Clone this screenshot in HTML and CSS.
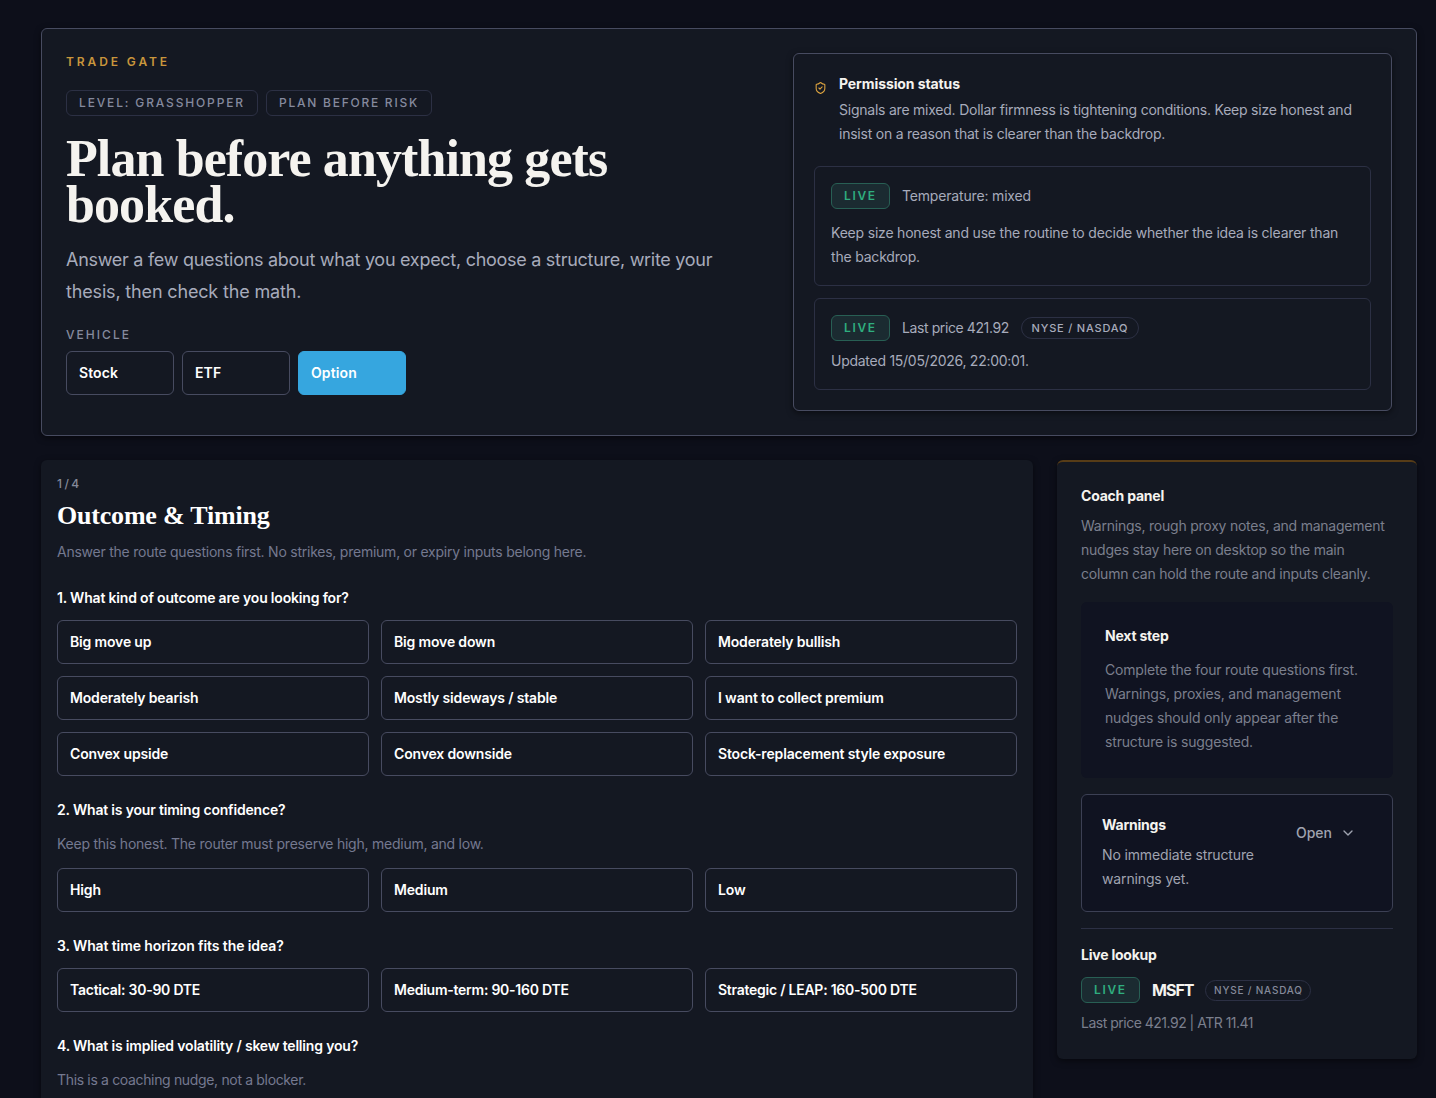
FILE: index.html
```
<!DOCTYPE html>
<html lang="en">
<head>
  <meta charset="UTF-8" />
  <meta name="viewport" content="width=device-width, initial-scale=1.0"/>
  <title>Trade Gate</title>
  <link rel="stylesheet" href="styles.css">
</head>
<body>
  <div class="page">
    <section class="hero">
      <div class="hero-main">
        <div class="eyebrow">Trade Gate</div>
        <div class="chips">
          <span class="chip">Level: Grasshopper</span>
          <span class="chip chip-plan">Plan before risk</span>
        </div>
        <h1>Plan before anything gets booked.</h1>
        <p class="lead">Answer a few questions about what you expect, choose a structure, write your <span class="lead-end">thesis, then check the math.</span></p>
        <div class="label">Vehicle</div>
        <div class="vehicles">
          <button class="option">Stock</button>
          <button class="option">ETF</button>
          <button class="option active">Option</button>
        </div>
      </div>

      <div class="status-card">
        <div class="status-head">
          <svg class="shield" viewBox="0 0 24 24" fill="none" stroke="currentColor" stroke-width="2" stroke-linecap="round" stroke-linejoin="round">
            <path d="M20 13c0 5-3.500 7.500-7.660 8.950a1 1 0 0 1-.67-.01C7.500 20.500 4 18 4 13V6a1 1 0 0 1 1-1c2 0 4.500-1.200 6.240-2.720a1.170 1.170 0 0 1 1.520 0C14.510 3.810 17 5 19 5a1 1 0 0 1 1 1z"/>
            <path d="m9 12 2 2 4-4"/>
          </svg>
          <div>
            <h3>Permission status</h3>
            <p class="signal">Signals are mixed. Dollar firmness is tightening conditions. Keep size honest and insist on a reason that is clearer than the backdrop.</p>
          </div>
        </div>
        <div class="status-box">
          <div class="row"><span class="live">Live</span><span class="temp">Temperature: mixed</span></div>
          <p>Keep size honest and use the routine to decide whether the idea is clearer than the backdrop.</p>
        </div>
        <div class="status-box price-box">
          <div class="row"><span class="live">Live</span><span class="price">Last price 421.92</span><span class="pill">NYSE / NASDAQ</span></div>
          <p>Updated 15/05/2026, 22:00:01.</p>
        </div>
      </div>
    </section>

    <div class="columns">
      <main class="panel">
        <div class="step">1 / 4</div>
        <h2>Outcome &amp; Timing</h2>
        <p class="muted">Answer the route questions first. No strikes, premium, or expiry inputs belong here.</p>

        <section class="question">
          <h4>1. What kind of outcome are you looking for?</h4>
          <div class="options">
            <button class="option">Big move up</button>
            <button class="option">Big move down</button>
            <button class="option">Moderately bullish</button>
            <button class="option">Moderately bearish</button>
            <button class="option">Mostly sideways / stable</button>
            <button class="option">I want to collect premium</button>
            <button class="option">Convex upside</button>
            <button class="option">Convex downside</button>
            <button class="option">Stock-replacement style exposure</button>
          </div>
        </section>

        <section class="question">
          <h4>2. What is your timing confidence?</h4>
          <p class="muted">Keep this honest. The router must preserve high, medium, and low.</p>
          <div class="options">
            <button class="option">High</button>
            <button class="option">Medium</button>
            <button class="option">Low</button>
          </div>
        </section>

        <section class="question">
          <h4 class="horizon">3. What time horizon fits the idea?</h4>
          <div class="options">
            <button class="option dte">Tactical: 30-90 DTE</button>
            <button class="option dte">Medium-term: 90-160 DTE</button>
            <button class="option dte">Strategic / LEAP: 160-500 DTE</button>
          </div>
        </section>

        <section class="question">
          <h4>4. What is implied volatility / skew telling you?</h4>
          <p class="muted nudge">This is a coaching nudge, not a blocker.</p>
        </section>
      </main>

      <aside class="coach">
        <h3>Coach panel</h3>
        <p class="coach-text">Warnings, rough proxy notes, and management nudges stay here on desktop so the main column can hold the route and inputs cleanly.</p>
        <div class="next">
          <h3>Next step</h3>
          <p>Complete the four route questions first. Warnings, proxies, and management nudges should only appear after the structure is suggested.</p>
        </div>
        <div class="warnings">
          <div class="warnings-text">
            <h3>Warnings</h3>
            <p>No immediate structure warnings yet.</p>
          </div>
          <button class="open">Open
            <svg viewBox="0 0 24 24" fill="none" stroke="currentColor" stroke-width="2" stroke-linecap="round" stroke-linejoin="round"><path d="m6 9 6 6 6-6"/></svg>
          </button>
        </div>
        <div class="lookup">
          <h3>Live lookup</h3>
          <div class="row"><span class="live">Live</span><strong class="ticker">MSFT</strong><span class="pill small">NYSE / NASDAQ</span></div>
          <p class="quote">Last price 421.92 | ATR 11.41</p>
        </div>
      </aside>
    </div>
  </div>
</body>
</html>
```
FILE: styles.css
```
*{margin:0;padding:0;box-sizing:border-box;}
body{background:#0d0f1a;color:#f5f3ef;font-family:Inter,sans-serif;font-size:14px;line-height:24px;letter-spacing:-0.22px;height:100vh;overflow:hidden;}
button{font-family:inherit;letter-spacing:inherit;cursor:pointer;}
.page{padding:28px 19px 0 41px;}

.hero{display:grid;grid-template-columns:1fr 599px;gap:24px;height:408px;padding:24px;background:#141822;border:1px solid #474b60;border-radius:6px;box-shadow:0 2px 6px rgba(0,0,0,0.5);}
.eyebrow{font-size:12px;line-height:18px;font-weight:600;letter-spacing:2.9px;text-transform:uppercase;color:#c9963c;}
.chips{display:flex;gap:8px;margin-top:19px;}
.chip{height:26px;width:192px;padding:0 12px;border:1px solid #2c3044;border-radius:6px;font-size:12px;line-height:24px;font-weight:500;letter-spacing:1.85px;text-transform:uppercase;color:#858a9e;white-space:nowrap;}
.chip-plan{width:166px;letter-spacing:1.75px;}
h1{margin-top:20px;font-family:"Liberation Serif",serif;font-size:52px;line-height:46px;font-weight:700;letter-spacing:-0.9px;}
.lead{margin-top:16px;font-size:18px;line-height:32px;letter-spacing:-0.28px;color:#a7abbb;}
.lead-end{letter-spacing:-0.16px;}
.label{margin-top:18px;font-size:12px;line-height:18px;font-weight:500;letter-spacing:2.04px;text-transform:uppercase;color:#858a9e;}
.vehicles{display:flex;gap:8px;margin-top:7px;}
.vehicles .option{width:108px;letter-spacing:0.1px;}
.option{height:44px;padding:0 12px;background:transparent;border:1px solid #474b60;border-radius:6px;color:#fff;font-size:14px;line-height:20px;font-weight:600;letter-spacing:-0.16px;text-align:left;}
.option.active{background:#36a6df;border-color:#36a6df;}
.option.dte{letter-spacing:-0.25px;}

.status-card{padding:20px;border:1px solid #474b60;border-radius:6px;box-shadow:0 2px 6px rgba(0,0,0,0.5);color:#a7abbb;}
h3{font-size:14px;line-height:20px;font-weight:700;color:#f5f3ef;}
.status-head{display:flex;gap:12px;}
.status-head h3{letter-spacing:-0.1px;}
.shield{flex:none;width:13px;height:20px;margin-top:4px;color:#dda33f;}
.signal{margin-top:4px;letter-spacing:-0.23px;}
.status-box{margin-top:20px;padding:16px;border:1px solid #2c3044;border-radius:6px;}
.status-box p{margin-top:12px;letter-spacing:-0.2px;}
.price-box{margin-top:12px;}
.price-box p{margin-top:8px;letter-spacing:-0.27px;}
.row{display:flex;align-items:center;gap:12px;}
.live{width:59px;height:26px;padding-left:12px;background:#1b2b31;border:1px solid #285f54;border-radius:6px;color:#2fae7f;font-size:12px;line-height:24px;font-weight:600;letter-spacing:1.65px;text-transform:uppercase;}
.temp{letter-spacing:-0.17px;}
.price{letter-spacing:-0.4px;}
.pill{width:118px;height:22px;border:1px solid #2c3044;border-radius:11px;font-size:11px;line-height:20px;font-weight:500;letter-spacing:0.8px;text-align:center;color:#a7abbb;}
.pill.small{width:106px;height:21px;font-size:10px;line-height:19px;color:#858a9a;}

.columns{display:grid;grid-template-columns:1fr 360px;gap:24px;align-items:start;margin-top:24px;}
.panel{min-height:638px;padding:16px 16px 6px;background:#141822;border-radius:6px 6px 0 0;box-shadow:0 2px 6px rgba(0,0,0,0.5);}
.step{font-size:12px;line-height:16px;font-weight:500;letter-spacing:-0.4px;color:#858a9a;}
h2{margin-top:8px;font-family:"Liberation Serif",serif;font-size:26px;line-height:32px;font-weight:700;letter-spacing:-0.2px;color:#fff;}
.muted{color:#747990;letter-spacing:-0.24px;}
.nudge{letter-spacing:-0.34px;}
h2 + .muted{margin-top:8px;}
.question{margin-top:24px;}
h4{font-size:14px;line-height:20px;font-weight:600;letter-spacing:-0.18px;color:#fff;}
.horizon{letter-spacing:-0.11px;}
h4 + .muted{margin-top:12px;}
.options{display:grid;grid-template-columns:repeat(3,1fr);gap:12px;margin-top:12px;}

.coach{padding:24px;background:#141822;border-top:2px solid #573c17;border-radius:6px;box-shadow:0 2px 6px rgba(0,0,0,0.5);color:#7b7f8d;}
.coach-text{margin-top:8px;letter-spacing:-0.23px;}
.next{margin-top:16px;padding:24px;background:#101321;border-radius:6px;}
.next p{margin-top:12px;letter-spacing:-0.17px;}
.warnings{display:flex;justify-content:space-between;margin-top:16px;padding:20px;background:#101321;border:1px solid #3c4054;border-radius:6px;color:#a0a3b0;}
.warnings-text{width:170px;}
.warnings p{margin-top:8px;letter-spacing:-0.14px;}
.open{display:flex;align-items:center;gap:8px;height:35px;padding-right:16px;background:none;border:0;color:#a0a3b0;font-size:14px;font-weight:500;letter-spacing:0;}
.open svg{width:16px;height:16px;}
.lookup{margin-top:16px;padding-top:16px;border-top:1px solid #2c3044;}
.lookup .row{margin-top:12px;}
.ticker{font-size:16px;font-weight:700;letter-spacing:-1px;color:#f5f3ef;}
.quote{margin-top:8px;letter-spacing:-0.5px;}
```
